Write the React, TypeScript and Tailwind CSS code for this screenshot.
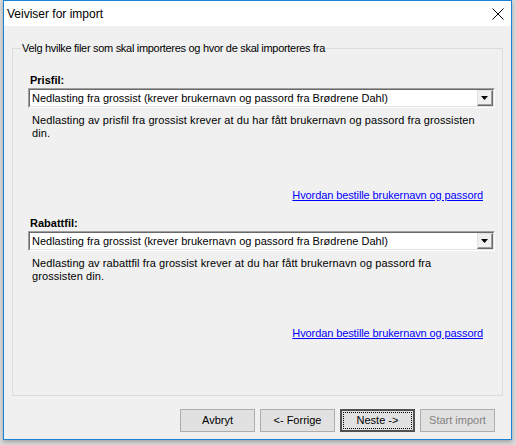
import React from "react";

const sans = { fontFamily: '"Liberation Sans", Arial, sans-serif' };

type ComboProps = { value: string };

function Combo({ value }: ComboProps) {
  return (
    <div className="flex h-[20px] border border-t-[#a0a0a0] border-l-[#a0a0a0] border-b-[#ffffff] border-r-[#ffffff]">
      <div className="flex flex-1 border border-t-[#696969] border-l-[#696969] border-b-[#e3e3e3] border-r-[#e3e3e3] bg-white">
        <div className="flex flex-1 items-center pl-[2px] text-[11px] leading-none text-black">{value}</div>
        <div className="flex w-[16px] border border-t-[#e3e3e3] border-l-[#e3e3e3] border-b-[#696969] border-r-[#696969] bg-[#f0f0f0]">
          <div className="flex flex-1 items-center justify-center border-b border-r border-b-[#a0a0a0] border-r-[#a0a0a0]">
            <svg width="7" height="4" viewBox="0 0 7 4">
              <path d="M0 0h7L3.5 4z" fill="#000" />
            </svg>
          </div>
        </div>
      </div>
    </div>
  );
}

type SourceProps = {
  label: string;
  value: string;
  lines: string[];
  gap: string;
};

function Source({ label, value, lines, gap }: SourceProps) {
  return (
    <div className="flex flex-col">
      <div className="pl-[2px] text-[11px] font-bold leading-[13px] text-black">{label}</div>
      <div className="mt-[1px]">
        <Combo value={value} />
      </div>
      <div className="mt-[6px] pl-[4px] pr-[8px] text-[11px] leading-[13px] tracking-[0.08px] text-black">
        {lines.map((l) => (
          <div key={l}>{l}</div>
        ))}
      </div>
      <div className={`flex justify-end pr-[12px] ${gap}`}>
        <span className="text-[11px] leading-[13px] tracking-[-0.1px] text-[#0000ff] underline">
          Hvordan bestille brukernavn og passord
        </span>
      </div>
    </div>
  );
}

type BtnProps = { children: React.ReactNode; focused?: boolean; disabled?: boolean };

function Btn({ children, focused, disabled }: BtnProps) {
  if (focused) {
    return (
      <div className="flex h-[23px] w-[75px] border-2 border-[#505050] bg-[#e1e1e1] p-[1px]">
        <div className="flex flex-1 items-center justify-center border border-dotted border-black text-[11px] text-black">
          {children}
        </div>
      </div>
    );
  }
  return (
    <div
      className={`flex h-[23px] w-[75px] items-center justify-center border border-[#adadad] bg-[#e1e1e1] text-[11px] ${
        disabled ? "text-[#838383]" : "text-black"
      }`}
    >
      {children}
    </div>
  );
}

export default function App() {
  return (
    <div className="flex h-[445px] w-[516px] overflow-hidden bg-[#d9d9d9]" style={sans}>
      <div className="ml-[3px] flex h-[440px] w-[509px] flex-col border border-[#1883d7] bg-[#f0f0f0] shadow-[0_2px_4px_rgba(0,0,0,0.25)]">
        {/* title bar */}
        <div className="flex h-[25px] items-center justify-between bg-white pl-[3px] pr-[6px]">
          <span className="text-[12px] text-black">Veiviser for import</span>
          <svg width="12" height="12" viewBox="0 0 12 12" className="mr-[1px]">
            <path d="M0.5 0.5L11.5 11.5M11.5 0.5L0.5 11.5" stroke="#000" strokeWidth="1" />
          </svg>
        </div>

        <div className="flex flex-1 flex-col px-[8px] pt-[16px]">
          <fieldset className="flex h-[354px] flex-col border border-[#dcdcdc] pl-[15px] pr-[7px]">
            <legend className="ml-[-7px] px-[1px] text-[11px] leading-[13px] tracking-[-0.3px] text-black">
              Velg hvilke filer som skal importeres og hvor de skal importeres fra
            </legend>
            <div className="mt-[19px]">
              <Source
                label="Prisfil:"
                value="Nedlasting fra grossist (krever brukernavn og passord fra Brødrene Dahl)"
                lines={[
                  "Nedlasting av prisfil fra grossist krever at du har fått brukernavn og passord fra grossisten",
                  "din.",
                ]}
                gap="mt-[49px]"
              />
            </div>
            <div className="mt-[15px]">
              <Source
                label="Rabattfil:"
                value="Nedlasting fra grossist (krever brukernavn og passord fra Brødrene Dahl)"
                lines={[
                  "Nedlasting av rabattfil fra grossist krever at du har fått brukernavn og passord fra",
                  "grossisten din.",
                ]}
                gap="mt-[44px]"
              />
            </div>
          </fieldset>

          <div className="mt-[13px] flex justify-end gap-[5px] pr-[8px]">
            <Btn>Avbryt</Btn>
            <Btn>&lt;- Forrige</Btn>
            <Btn focused>Neste -&gt;</Btn>
            <Btn disabled>Start import</Btn>
          </div>
        </div>
      </div>
    </div>
  );
}
